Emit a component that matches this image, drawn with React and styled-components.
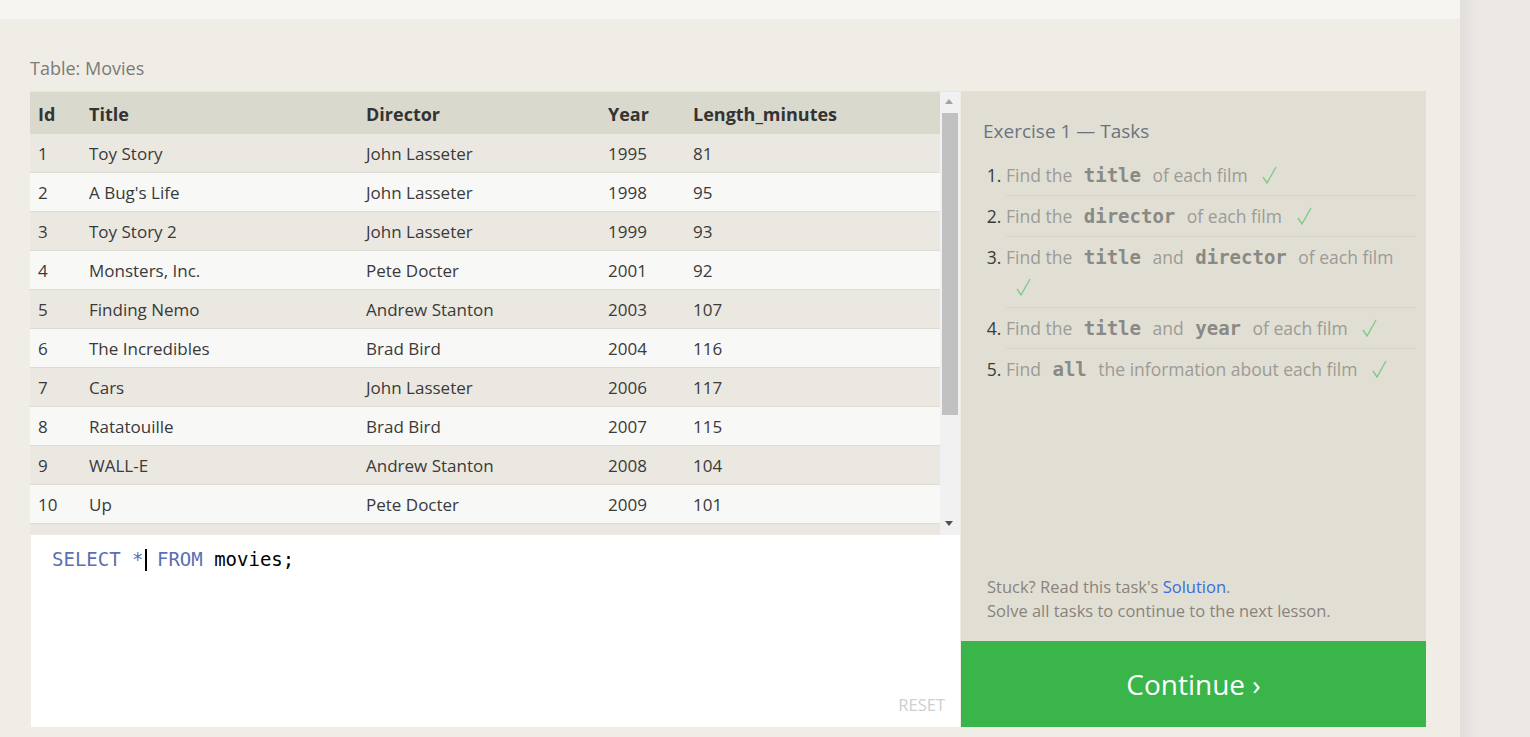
import React from 'react';
import styled, { createGlobalStyle } from 'styled-components';

const GlobalStyle = createGlobalStyle`
  html, body {
    margin: 0;
    padding: 0;
    height: 100%;
  }
  body {
    font-family: 'Open Sans', 'Noto Sans', sans-serif;
    background: #ece8e5;
  }
`;

const movies = [
  [1, 'Toy Story', 'John Lasseter', 1995, 81],
  [2, "A Bug's Life", 'John Lasseter', 1998, 95],
  [3, 'Toy Story 2', 'John Lasseter', 1999, 93],
  [4, 'Monsters, Inc.', 'Pete Docter', 2001, 92],
  [5, 'Finding Nemo', 'Andrew Stanton', 2003, 107],
  [6, 'The Incredibles', 'Brad Bird', 2004, 116],
  [7, 'Cars', 'John Lasseter', 2006, 117],
  [8, 'Ratatouille', 'Brad Bird', 2007, 115],
  [9, 'WALL-E', 'Andrew Stanton', 2008, 104],
  [10, 'Up', 'Pete Docter', 2009, 101],
];

const tasks = [
  ['Find the ', 'title', ' of each film'],
  ['Find the ', 'director', ' of each film'],
  ['Find the ', 'title', ' and ', 'director', ' of each film'],
  ['Find the ', 'title', ' and ', 'year', ' of each film'],
  ['Find ', 'all', ' the information about each film'],
];

function Check() {
  return (
    <CheckIcon width="15" height="18" viewBox="0 0 15 18">
      <polyline points="1,11 5,17 14,1" fill="none" stroke="#7fcb8a" strokeWidth="1.4" />
    </CheckIcon>
  );
}

export default function App() {
  return (
    <Page>
      <GlobalStyle />
      <Main>
        <TopBar />
        <Content>
          <TableLabel>Table: Movies</TableLabel>
          <Workspace>
            <LeftColumn>
              <TableBox>
                <TableScroll>
                  <Table>
                    <colgroup>
                      <col style={{ width: 51 }} />
                      <col style={{ width: 277 }} />
                      <col style={{ width: 242 }} />
                      <col style={{ width: 85 }} />
                      <col />
                    </colgroup>
                    <thead>
                      <tr>
                        <Th>Id</Th>
                        <Th>Title</Th>
                        <Th>Director</Th>
                        <Th>Year</Th>
                        <Th>Length_minutes</Th>
                      </tr>
                    </thead>
                    <tbody>
                      {movies.map((m, i) => (
                        <Row key={m[0]} $odd={i % 2 === 0}>
                          {m.map((v, j) => (
                            <Td key={j}>{v}</Td>
                          ))}
                        </Row>
                      ))}
                    </tbody>
                  </Table>
                </TableScroll>
                <ScrollBar>
                  <Arrow $up />
                  <Track>
                    <Thumb />
                  </Track>
                  <Arrow />
                </ScrollBar>
              </TableBox>
              <Editor>
                <CodeLine>
                  <Kw>SELECT *</Kw>
                  <Caret />
                  <Kw> FROM</Kw> movies;
                </CodeLine>
                <Reset>RESET</Reset>
              </Editor>
            </LeftColumn>
            <RightColumn>
              <TaskPanel>
                <TaskTitle>Exercise 1 — Tasks</TaskTitle>
                <TaskList>
                  {tasks.map((parts, i) => (
                    <TaskItem key={i}>
                      {parts.map((p, j) =>
                        j % 2 === 1 ? <Code key={j}>{p}</Code> : <span key={j}>{p}</span>
                      )}{' '}
                      <Check />
                    </TaskItem>
                  ))}
                </TaskList>
                <Help>
                  Stuck? Read this task's <Link>Solution</Link>.
                  <br />
                  Solve all tasks to continue to the next lesson.
                </Help>
              </TaskPanel>
              <ContinueButton>Continue ›</ContinueButton>
            </RightColumn>
          </Workspace>
        </Content>
      </Main>
      <SideStrip />
    </Page>
  );
}

const Page = styled.div`
  display: flex;
  width: 1530px;
  height: 737px;
  overflow: hidden;
`;

const Main = styled.div`
  width: 1460px;
  display: flex;
  flex-direction: column;
  background: #f0ede6;
`;

const TopBar = styled.div`
  height: 19px;
  background: #f6f5f1;
`;

const Content = styled.div`
  padding: 37px 34px 0 30px;
`;

const TableLabel = styled.div`
  font-size: 18px;
  line-height: 24px;
  color: #7b7b79;
  margin-bottom: 11px;
`;

const Workspace = styled.div`
  display: grid;
  grid-template-columns: 930px 466px;
  height: 636px;
`;

const LeftColumn = styled.div`
  display: flex;
  flex-direction: column;
`;

const TableBox = styled.div`
  display: flex;
  height: 444px;
  border-top: 1px solid #e6e4dc;
  box-sizing: border-box;
`;

const TableScroll = styled.div`
  flex: 1;
  overflow: hidden;
  background: #eae8e1;
`;

const Table = styled.table`
  width: 100%;
  border-collapse: collapse;
  table-layout: fixed;
  font-size: 17px;
  color: #3a3a3a;
`;

const Th = styled.th`
  text-align: left;
  font-weight: 700;
  font-size: 18px;
  color: #333;
  background: #dad9cd;
  height: 42px;
  padding: 1px 8px 0;
  box-sizing: border-box;
`;

const Row = styled.tr`
  background: ${(p) => (p.$odd ? '#eae8e1' : '#f8f8f7')};
  border-bottom: 1px solid #dcdbd4;
`;

const Td = styled.td`
  height: 38px;
  padding: 0 8px;
  white-space: nowrap;
`;

const ScrollBar = styled.div`
  width: 20px;
  display: flex;
  flex-direction: column;
  background: #f1f1f1;
`;

const Arrow = styled.div`
  height: 21px;
  position: relative;
  &::after {
    content: '';
    position: absolute;
    left: 5px;
    top: 7px;
    border-left: 4px solid transparent;
    border-right: 4px solid transparent;
    ${(p) =>
      p.$up
        ? 'border-bottom: 5px solid #a3a3a3;'
        : 'border-top: 5px solid #505050;'}
  }
`;

const Track = styled.div`
  flex: 1;
  padding: 0 2px;
`;

const Thumb = styled.div`
  height: 302px;
  background: #c1c1c1;
`;

const Editor = styled.div`
  flex: 1;
  background: #fff;
  margin-left: 1px;
  padding: 12px 15px 12px 21px;
  display: flex;
  flex-direction: column;
  justify-content: space-between;
`;

const CodeLine = styled.div`
  font-family: 'DejaVu Sans Mono', 'Liberation Mono', monospace;
  font-size: 19px;
  line-height: 24px;
  color: #000;
  white-space: pre;
`;

const Kw = styled.span`
  color: #5a70b2;
`;

const Caret = styled.span`
  display: inline-block;
  width: 2px;
  height: 22px;
  background: #000;
  vertical-align: -5px;
  margin: 0 -1px 0 1px;
`;

const Reset = styled.div`
  align-self: flex-end;
  font-size: 16.5px;
  color: #cfcfcf;
  line-height: 20px;
`;

const RightColumn = styled.div`
  display: flex;
  flex-direction: column;
  margin-left: 1px;
`;

const TaskPanel = styled.div`
  flex: 1;
  background: #e1dfd4;
  padding: 27px 10px 18px 22px;
  display: flex;
  flex-direction: column;
`;

const TaskTitle = styled.div`
  font-size: 19px;
  line-height: 26px;
  color: #6c7380;
  margin-bottom: 11px;
`;

const TaskList = styled.ol`
  margin: 0;
  padding: 0 0 0 23px;
  font-size: 17.5px;
  color: #9c9b96;
`;

const TaskItem = styled.li`
  line-height: 30px;
  padding: 5px 0;
  border-bottom: 1px solid #d6d4c9;
  &:last-child {
    border-bottom: none;
  }
  &::marker {
    color: #3a3a3a;
  }
`;

const Code = styled.code`
  font-family: 'DejaVu Sans Mono', 'Liberation Mono', monospace;
  font-weight: 700;
  font-size: 19px;
  line-height: 1;
  color: #8a8984;
  padding: 0 7px;
`;

const CheckIcon = styled.svg`
  margin-left: 10px;
  vertical-align: -2px;
`;

const Help = styled.div`
  margin-top: auto;
  padding-left: 4px;
  font-size: 16.5px;
  line-height: 24px;
  color: #8b837b;
`;

const Link = styled.span`
  color: #3b6ce0;
`;

const ContinueButton = styled.div`
  height: 86px;
  background: #3ab54a;
  color: #fff;
  font-size: 28px;
  display: flex;
  align-items: center;
  justify-content: center;
`;

const SideStrip = styled.div`
  flex: 1;
  background: linear-gradient(to right, #e2dedb, #ece8e5 18px);
`;
